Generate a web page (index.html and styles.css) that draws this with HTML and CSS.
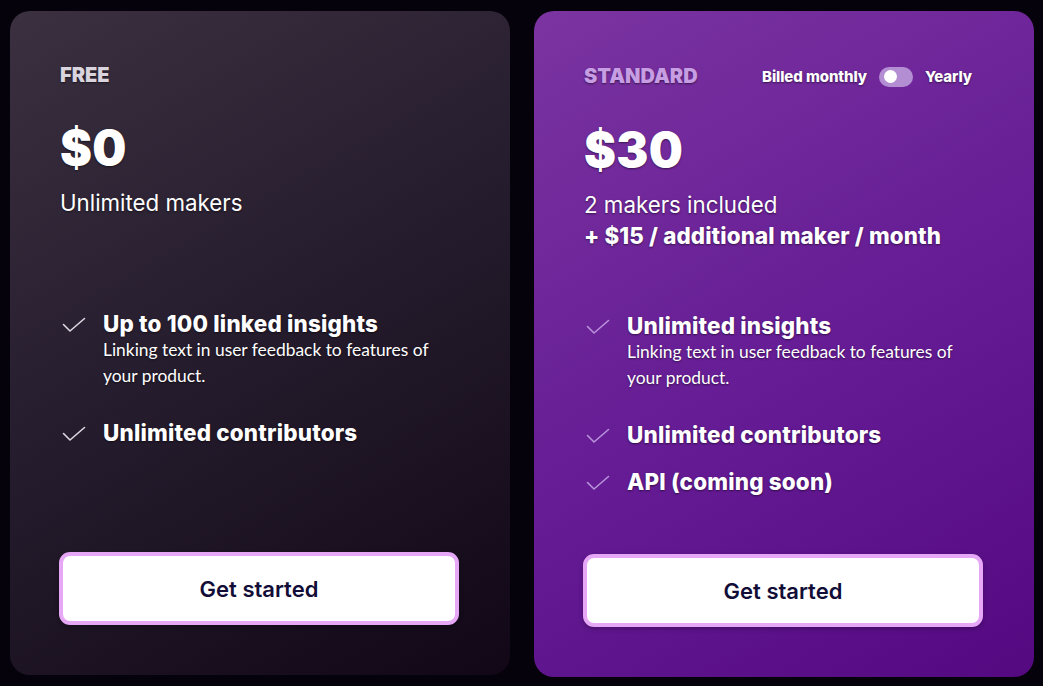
FILE: index.html
```html
<!DOCTYPE html>
<html lang="en">
<head>
<meta charset="utf-8">
<title>Pricing</title>
<link rel="stylesheet" href="styles.css">
</head>
<body>
<main class="plans">
  <section class="card card-free">
    <header class="card-head">
      <h2 class="plan-name">FREE</h2>
    </header>
    <div class="price">$0</div>
    <div class="subtitle">
      <p class="sub-line">Unlimited makers</p>
    </div>
    <ul class="features">
      <li class="feature">
        <svg class="check" viewBox="0 0 24 16" width="24" height="16"><path d="M1.5 7.5 L8 14 L22.5 1.5" fill="none" stroke="currentColor" stroke-width="1.6" stroke-linecap="round" stroke-linejoin="round"/></svg>
        <div class="feature-body">
          <div class="feature-title">Up to 100 linked insights</div>
          <p class="feature-desc">Linking text in user feedback to features of your product.</p>
        </div>
      </li>
      <li class="feature">
        <svg class="check" viewBox="0 0 24 16" width="24" height="16"><path d="M1.5 7.5 L8 14 L22.5 1.5" fill="none" stroke="currentColor" stroke-width="1.6" stroke-linecap="round" stroke-linejoin="round"/></svg>
        <div class="feature-body">
          <div class="feature-title">Unlimited contributors</div>
        </div>
      </li>
    </ul>
    <button class="cta">Get started</button>
  </section>

  <section class="card card-standard">
    <header class="card-head">
      <h2 class="plan-name">STANDARD</h2>
      <div class="billing">
        <span class="billing-label">Billed monthly</span>
        <span class="toggle"><span class="knob"></span></span>
        <span class="billing-label">Yearly</span>
      </div>
    </header>
    <div class="price">$30</div>
    <div class="subtitle">
      <p class="sub-line">2 makers included</p>
      <p class="sub-line sub-strong">+ $15 / additional maker / month</p>
    </div>
    <ul class="features">
      <li class="feature">
        <svg class="check" viewBox="0 0 24 16" width="24" height="16"><path d="M1.5 7.5 L8 14 L22.5 1.5" fill="none" stroke="currentColor" stroke-width="1.6" stroke-linecap="round" stroke-linejoin="round"/></svg>
        <div class="feature-body">
          <div class="feature-title">Unlimited insights</div>
          <p class="feature-desc">Linking text in user feedback to features of your product.</p>
        </div>
      </li>
      <li class="feature">
        <svg class="check" viewBox="0 0 24 16" width="24" height="16"><path d="M1.5 7.5 L8 14 L22.5 1.5" fill="none" stroke="currentColor" stroke-width="1.6" stroke-linecap="round" stroke-linejoin="round"/></svg>
        <div class="feature-body">
          <div class="feature-title">Unlimited contributors</div>
        </div>
      </li>
      <li class="feature">
        <svg class="check" viewBox="0 0 24 16" width="24" height="16"><path d="M1.5 7.5 L8 14 L22.5 1.5" fill="none" stroke="currentColor" stroke-width="1.6" stroke-linecap="round" stroke-linejoin="round"/></svg>
        <div class="feature-body">
          <div class="feature-title">API (coming soon)</div>
        </div>
      </li>
    </ul>
    <button class="cta">Get started</button>
  </section>
</main>
</body>
</html>
```

FILE: styles.css
```css
* { box-sizing: border-box; }

html, body {
  margin: 0;
  padding: 0;
  background: #06020b;
}

body {
  padding: 11px 0 0 10px;
  font-family: Inter, "Noto Sans", sans-serif;
  color: #ffffff;
}

.plans {
  display: flex;
  align-items: flex-start;
  gap: 24px;
}

.card {
  width: 500px;
  border-radius: 20px;
  padding: 52px 50px 50px;
  display: flex;
  flex-direction: column;
  text-shadow: 0 1px 2px rgba(0, 0, 0, 0.5);
}

.card-free {
  background: linear-gradient(150deg, #3b3040 0%, #261d2e 45%, #110716 100%);
}

.card-standard {
  background: linear-gradient(150deg, #7b34a1 0%, #661d95 50%, #540981 100%);
}

.card-head {
  display: flex;
  align-items: center;
  justify-content: space-between;
  min-height: 24px;
}

.plan-name {
  margin: 0;
  font-size: 20px;
  font-weight: 900;
  line-height: 25px;
  letter-spacing: 0;
}

.card-free .plan-name { color: #d9d4dd; }
.card-standard .plan-name { color: #c79de3; }

.billing {
  display: flex;
  align-items: center;
  gap: 12px;
  margin-right: 12px;
}

.billing-label {
  font-size: 15px;
  font-weight: 800;
  line-height: 27px;
  letter-spacing: -0.1px;
  color: #ffffff;
}

.toggle {
  display: flex;
  align-items: center;
  width: 34px;
  height: 20px;
  border-radius: 10px;
  background: #b48ed3;
  padding-left: 5px;
}

.knob {
  width: 13px;
  height: 13px;
  border-radius: 50%;
  background: #ffffff;
}

.price {
  margin-top: 32px;
  font-size: 48px;
  font-weight: 900;
  line-height: 56px;
  letter-spacing: 0.3px;
}

.subtitle {
  margin-top: 11px;
  height: 124px;
}

.sub-line {
  margin: 0;
  font-size: 22.3px;
  font-weight: 400;
  line-height: 31px;
}

.sub-strong {
  font-weight: 800;
  letter-spacing: 0.15px;
}

.features {
  list-style: none;
  margin: 0;
  padding: 0;
  height: 241px;
  display: flex;
  flex-direction: column;
  gap: 21px;
}

.feature {
  display: flex;
  align-items: flex-start;
}

.check {
  flex: none;
  width: 24px;
  height: 16px;
  margin: 6px 17px 0 2px;
}

.card-free .check { color: #dcd8e2; }
.card-standard .check { color: #b993da; }

.feature-title {
  font-size: 22.4px;
  font-weight: 800;
  line-height: 26px;
  letter-spacing: 0.2px;
}

.feature-desc {
  margin: 0 0 10px;
  font-family: Lato, "Noto Sans", sans-serif;
  font-size: 17.4px;
  line-height: 26px;
  width: 345px;
}

.cta {
  height: 73px;
  width: 400px;
  margin-left: -1px;
  border: 4px solid #e6a7f6;
  border-radius: 11px;
  background: #ffffff;
  color: #110d37;
  font-family: Inter, "Noto Sans", sans-serif;
  font-size: 22px;
  font-weight: 600;
  text-shadow: none;
  box-shadow: 0 2px 4px rgba(0, 0, 0, 0.25);
  cursor: pointer;
}
```
